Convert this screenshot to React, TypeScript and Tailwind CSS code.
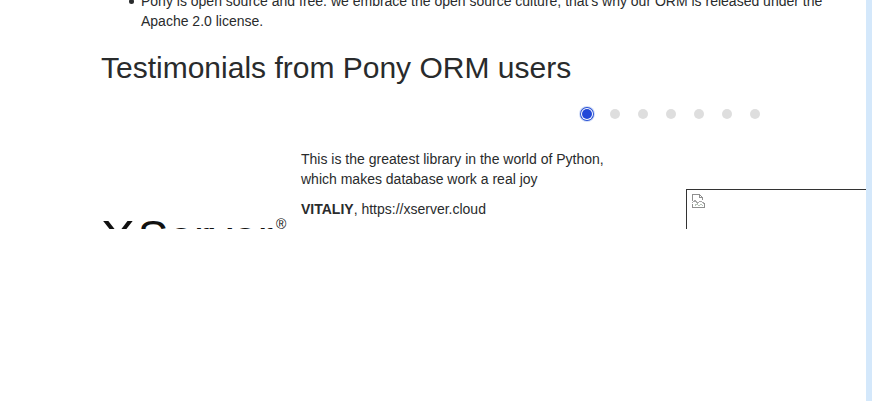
import React from 'react';

const dots = [1, 2, 3, 4, 5, 6];

const BrokenImage: React.FC = () => (
  <svg width="16" height="16" viewBox="0 0 16 16" fill="none" stroke="#8f8f8f" strokeWidth="1" shapeRendering="crispEdges">
    <path d="M1.5 7.5V1.5H8.5L11.5 4.5V7" />
    <path d="M8.5 1.5V4.5H11.5" />
    <path d="M1.5 11V14.5H13.5V9.5" />
    <path d="M1.5 9.5L4 7.5L6.5 10L9 8L13.5 10.5" stroke="#a8a8a8" />
    <path d="M4 12.5L6 11L8 12.5L10 11.5L12 12.5" stroke="#b8c4b8" />
  </svg>
);

const App: React.FC = () => {
  return (
    <div className="flex h-[401px] w-[872px] overflow-hidden bg-white font-['Liberation_Sans',Arial,sans-serif] text-[14px] leading-[20px] text-[#292b2c]">
      <div className="w-[866px] shrink-0 pl-[101px]">
        <ul className="mt-[-9px] w-[740px] pl-[28px]">
          <li className="flex">
            <span className="mt-[8px] mr-[7px] h-[5px] w-[5px] shrink-0 rounded-full bg-[#292b2c]" />
            <span>
              Pony is open source and free. we embrace the open source culture, that's why our ORM is released under the Apache 2.0 license.
            </span>
          </li>
        </ul>
        <h2 className="mt-[19px] text-[30px] leading-[36px] font-normal">Testimonials from Pony ORM users</h2>
        <div className="mt-[21px] flex h-[14px] items-center gap-[18px] pl-[481px]">
          <span className="h-[10px] w-[10px] rounded-full bg-[#2148d8] shadow-[0_0_0_1px_#ffffff,0_0_0_2px_#2a52d4,0_0_0_3px_#d3def8]" />
          {dots.map((d) => (
            <span key={d} className="h-[10px] w-[10px] rounded-full bg-[#dedede]" />
          ))}
        </div>
        <div className="mt-[28px] flex h-[80px] overflow-hidden">
          <div className="relative h-[80px] w-[200px] shrink-0 overflow-hidden">
            <span className="absolute left-0 top-[63px] text-[46px] leading-[50px] text-[#111111]">
              <span className="mr-[6px] inline-block origin-left scale-x-[1.1]">X</span>Server
            </span>
            <span className="absolute left-[175px] top-[68px] text-[14px] leading-[14px] text-[#111111]">®</span>
          </div>
          <div className="w-[385px] shrink-0">
            <p>
              This is the greatest library in the world of Python,
              <br />
              which makes database work a real joy
            </p>
            <p className="mt-[10px]">
              <b>VITALIY</b>, https://xserver.cloud
            </p>
          </div>
          <div className="mt-[40px] h-[60px] flex-1 border-t border-l border-[#333333] pl-[4px] pt-[3px]">
            <BrokenImage />
          </div>
        </div>
      </div>
      <div className="w-[6px] bg-[#d4e8fb]" />
    </div>
  );
};

export default App;
